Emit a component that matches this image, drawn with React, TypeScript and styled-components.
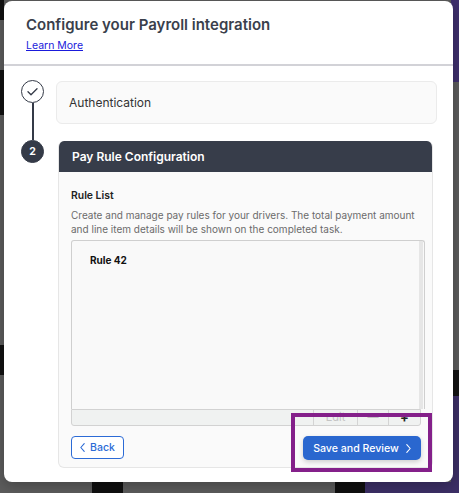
import React from 'react'
import styled, { createGlobalStyle } from 'styled-components'

const GlobalStyle = createGlobalStyle`
  html, body {
    margin: 0;
    padding: 0;
  }
  body {
    font-family: Inter, "Liberation Sans", sans-serif;
    -webkit-font-smoothing: antialiased;
  }
`

const INK = '#343a47'
const BLUE = '#2a67cf'

// the dimmed page behind the modal
const Backdrop = styled.div`
  width: 459px;
  height: 493px;
  box-sizing: border-box;
  padding: 1px 6px 11px 4px;
  background:
    linear-gradient(#121212, #121212) 0 0 / 4px 20px no-repeat,
    linear-gradient(#111, #111) 0 70px / 4px 45px no-repeat,
    linear-gradient(#121212, #121212) 0 345px / 4px 30px no-repeat,
    linear-gradient(#3e2f6c, #3e2f6c) right 0 top 0 / 8px 82px no-repeat,
    linear-gradient(#141414, #141414) right 0 top 370px / 8px 26px no-repeat,
    linear-gradient(#3c2f66, #3c2f66) right 0 top 396px / 8px 97px no-repeat,
    linear-gradient(#101010, #101010) 92px 482px / 31px 11px no-repeat,
    linear-gradient(#101010, #101010) 335px 482px / 30px 11px no-repeat,
    linear-gradient(#3c2f66, #3c2f66) 365px 482px / 94px 11px no-repeat,
    #5c5c5c;
`

const Modal = styled.div`
  position: relative;
  width: 449px;
  height: 481px;
  background: #fff;
  border-radius: 8px;
  box-shadow: 0 4px 14px rgba(0, 0, 0, 0.25);
  display: flex;
  flex-direction: column;
  overflow: hidden;
`

const Header = styled.div`
  display: flex;
  flex-direction: column;
  align-items: flex-start;
  gap: 4px;
  padding: 14px 22px 12px;
  border-bottom: 2px solid #d2d2d7;
`

const Title = styled.h1`
  margin: 0;
  font-size: 15px;
  line-height: 20px;
  font-weight: 600;
  color: #3a3f4c;
`

const LearnMore = styled.a`
  font-size: 10.5px;
  line-height: 13px;
  color: #1a1adb;
  text-decoration: underline;
`

const Body = styled.div`
  display: flex;
  gap: 12px;
  padding: 14px 16px 0 17px;
`

const Rail = styled.div`
  display: flex;
  flex-direction: column;
  align-items: center;
  width: 23px;
  flex: none;
`

const StepDot = styled.div<{ $done?: boolean }>`
  width: 23px;
  height: 23px;
  box-sizing: border-box;
  border-radius: 50%;
  display: flex;
  align-items: center;
  justify-content: center;
  border: 1px solid ${INK};
  background: ${(p) => (p.$done ? '#fff' : INK)};
  color: #fff;
  font-size: 10.5px;
  font-weight: 700;
`

const RailLine = styled.div`
  width: 2px;
  height: 37px;
  background: ${INK};
`

const Steps = styled.div`
  flex: 1;
  display: flex;
  flex-direction: column;
  padding-top: 1px;
`

const AuthCard = styled.div`
  height: 43px;
  box-sizing: border-box;
  display: flex;
  align-items: center;
  padding: 0 12px;
  background: #fafafa;
  border: 1px solid #ebebeb;
  border-radius: 6px;
  font-size: 12px;
  color: #333;
`

const PayCard = styled.div`
  margin: 17px 4px 0 2px;
  border-radius: 6px;
  border: 1px solid #e6e6e6;
  border-top: none;
  background: #fafafa;
  overflow: hidden;
`

const PayHeader = styled.div`
  height: 31px;
  display: flex;
  align-items: center;
  padding: 0 13px;
  background: #373d4a;
  color: #fff;
  font-size: 12px;
  font-weight: 600;
`

const Section = styled.div`
  padding: 16px 7px 0 12px;
`

const SectionTitle = styled.div`
  font-size: 10.4px;
  line-height: 16px;
  font-weight: 600;
  color: #222;
`

const Description = styled.p`
  margin: 4px 0 4px;
  font-size: 10px;
  line-height: 14px;
  color: #6b6b6b;
`

const ListPanel = styled.div`
  height: 169px;
  box-sizing: border-box;
  display: flex;
  border: 1px solid #cfcfcf;
  border-bottom: none;
  border-radius: 3px 3px 0 0;
  background: #f9f9f9;
`

const ListContent = styled.div`
  flex: 1;
  padding: 13px 18px;
`

const RuleName = styled.div`
  font-size: 10px;
  font-weight: 700;
  color: #111;
`

const ScrollTrack = styled.div`
  width: 4px;
  background: #e6e6e6;
  margin-right: 1px;
`

const Toolbar = styled.div`
  height: 17px;
  box-sizing: border-box;
  margin-right: 4px;
  display: flex;
  justify-content: flex-end;
  background: #f0f2f1;
  border: 1px solid #d2d2d2;
  border-radius: 0 0 3px 3px;
`

const ToolButton = styled.div<{ $w: number; $muted?: boolean; $strong?: boolean }>`
  width: ${(p) => p.$w}px;
  display: flex;
  align-items: center;
  justify-content: center;
  border-left: 1px solid #d4d4d4;
  font-size: ${(p) => (p.$strong ? 13 : 11)}px;
  font-weight: ${(p) => (p.$strong ? 700 : 400)};
  line-height: 1;
  color: ${(p) => (p.$muted ? '#c4c4c4' : '#222')};
`

const Actions = styled.div`
  display: flex;
  justify-content: space-between;
  padding: 10px 11px 7px 12px;
`

const BackButton = styled.button`
  width: 53px;
  height: 23px;
  box-sizing: border-box;
  display: flex;
  align-items: center;
  justify-content: center;
  gap: 5px;
  padding: 0;
  border: 1px solid #2c6bd6;
  border-radius: 4px;
  background: #fff;
  color: #2c6bd6;
  font-family: inherit;
  font-size: 10.5px;
  font-weight: 500;
`

const SaveButton = styled.button`
  width: 118px;
  height: 24px;
  display: flex;
  align-items: center;
  justify-content: center;
  gap: 7px;
  padding: 0;
  border: none;
  border-radius: 5px;
  background: ${BLUE};
  color: #fff;
  font-family: inherit;
  font-size: 10.6px;
  font-weight: 500;
  box-shadow: 0 2px 5px rgba(0, 0, 0, 0.18);
`

// annotation frame drawn over the screenshot
const Highlight = styled.div`
  position: absolute;
  left: 287px;
  top: 412px;
  width: 141px;
  height: 59px;
  box-sizing: border-box;
  border: 4px solid #84208a;
  pointer-events: none;
`

const Chevron = ({ dir }: { dir: 'left' | 'right' }) => (
  <svg width="5" height="9" viewBox="0 0 5 9" fill="none">
    <path
      d={dir === 'left' ? 'M4.2 0.7L0.8 4.5l3.4 3.8' : 'M0.8 0.7l3.4 3.8-3.4 3.8'}
      stroke="currentColor"
      strokeWidth="1.1"
      strokeLinecap="round"
      strokeLinejoin="round"
    />
  </svg>
)

export default function App() {
  return (
    <>
      <GlobalStyle />
      <Backdrop>
        <Modal>
          <Header>
            <Title>Configure your Payroll integration</Title>
            <LearnMore href="#">Learn More</LearnMore>
          </Header>
          <Body>
            <Rail>
              <StepDot $done>
                <svg width="11" height="8" viewBox="0 0 11 8" fill="none">
                  <path d="M1 3.8l3 3 6-6" stroke={INK} strokeWidth="1.3" strokeLinecap="round" strokeLinejoin="round" />
                </svg>
              </StepDot>
              <RailLine />
              <StepDot>2</StepDot>
            </Rail>
            <Steps>
              <AuthCard>Authentication</AuthCard>
              <PayCard>
                <PayHeader>Pay Rule Configuration</PayHeader>
                <Section>
                  <SectionTitle>Rule List</SectionTitle>
                  <Description>
                    Create and manage pay rules for your drivers. The total payment amount and line item details will be
                    shown on the completed task.
                  </Description>
                  <ListPanel>
                    <ListContent>
                      <RuleName>Rule 42</RuleName>
                    </ListContent>
                    <ScrollTrack />
                  </ListPanel>
                  <Toolbar>
                    <ToolButton $w={43} $muted>Edit</ToolButton>
                    <ToolButton $w={30} $muted>—</ToolButton>
                    <ToolButton $w={31} $strong>+</ToolButton>
                  </Toolbar>
                </Section>
                <Actions>
                  <BackButton>
                    <Chevron dir="left" />
                    Back
                  </BackButton>
                  <SaveButton>
                    Save and Review
                    <Chevron dir="right" />
                  </SaveButton>
                </Actions>
              </PayCard>
            </Steps>
          </Body>
          <Highlight />
        </Modal>
      </Backdrop>
    </>
  )
}
